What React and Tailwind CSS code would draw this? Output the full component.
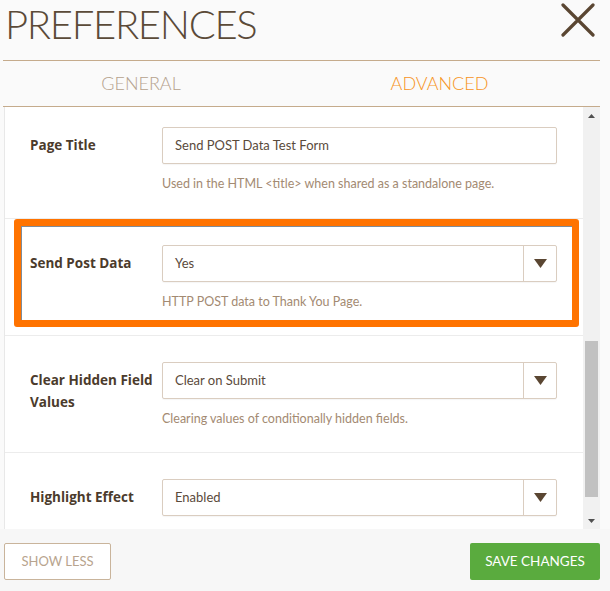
import React from 'react';

const sans = { fontFamily: 'Lato, "Open Sans", sans-serif' };

function Caret() {
  return (
    <svg width="13" height="9" viewBox="0 0 13 9" className="block">
      <path d="M0 0 H13 L6.5 9 Z" fill="#5a4632" />
    </svg>
  );
}

function Field({ value, select }) {
  return (
    <div className="flex h-[37px] w-[395px] items-stretch rounded-[2px] border border-[#dacdc0] bg-white shadow-[0_1px_1px_rgba(0,0,0,0.04)]">
      <div className="flex flex-1 items-center pl-[12px] text-[13px] text-[#5a4a3b]">{value}</div>
      {select && (
        <div className="flex w-[33px] items-center justify-center border-l border-[#dacdc0]">
          <Caret />
        </div>
      )}
    </div>
  );
}

function Row({ label, value, help, select, highlight, first }) {
  return (
    <div className={`relative flex shrink-0 border-b border-[#ececec] ${first ? 'h-[112px] pt-[20px]' : 'h-[117px] pt-[26px]'}`}>
      <div className="w-[157px] shrink-0 pl-[25px] pr-2 pt-[7px] text-[13.5px] font-bold leading-[22px] text-[#4b3b2c]" style={{ fontFamily: '"Open Sans", sans-serif' }}>
        {label}
      </div>
      <div className="flex flex-col">
        <Field value={value} select={select} />
        <div className="mt-[11px] text-[12.5px] text-[#a38a72]">{help}</div>
      </div>
      {highlight && (
        <div className="absolute left-[9px] right-[4px] top-0 bottom-[8px] rounded-[3px] border-[7px] border-[#ff7300] shadow-[inset_1px_1px_0_#7f8c99]" />
      )}
    </div>
  );
}

export default function App() {
  return (
    <div className="h-[591px] w-[610px] overflow-hidden bg-[#fafafa]" style={sans}>
      <div className="w-[600px] pl-[3px]">
        <div className="flex h-[61px] items-start justify-between border-b border-[#c5ab8c]">
          <h1 className="pl-[2px] pt-[1px] text-[40px] font-light leading-[46px] tracking-[-1.3px] text-[#5b4a38]">PREFERENCES</h1>
          <svg width="34" height="34" viewBox="0 0 34 34" className="mr-[5px] mt-[3px]">
            <path d="M2 2 L32 32 M32 2 L2 32" stroke="#5a4632" strokeWidth="3.2" strokeLinecap="round" />
          </svg>
        </div>
        <div className="flex h-[46px] items-center border-b border-[#c5ab8c] text-[18px] font-light">
          <div className="w-[276px] text-center text-[#b5a28d]">GENERAL</div>
          <div className="flex-1 text-center text-[#f7941d]">ADVANCED</div>
        </div>
      </div>

      <div className="flex h-[422px]">
        <div className="ml-[4px] flex w-[579px] flex-col overflow-hidden border-l border-[#e8e8e8] bg-white">
          <Row first label="Page Title" value="Send POST Data Test Form" help="Used in the HTML <title> when shared as a standalone page." />
          <Row highlight select label="Send Post Data" value="Yes" help="HTTP POST data to Thank You Page." />
          <Row select label={<>Clear Hidden Field<br />Values</>} value="Clear on Submit" help="Clearing values of conditionally hidden fields." />
          <Row select label="Highlight Effect" value="Enabled" help="Allow the highlight effect on form fields." />
        </div>
        <div className="flex w-[17px] flex-col items-center bg-[#f1f1f1]">
          <svg width="7" height="4" viewBox="0 0 7 4" className="mt-[7px]"><path d="M3.5 0 L7 4 H0 Z" fill="#505050" /></svg>
          <div className="mt-[223px] h-[156px] w-[13px] bg-[#c1c1c1]" />
          <svg width="7" height="4" viewBox="0 0 7 4" className="mt-[22px]"><path d="M0 0 H7 L3.5 4 Z" fill="#505050" /></svg>
        </div>
      </div>

      <div className="flex h-[62px] items-start justify-between bg-[#f7f7f7] pl-[4px] pt-[14px] pr-[10px]">
        <button className="h-[37px] w-[107px] rounded-[2px] border border-[#c9b49b] bg-white text-[13px] text-[#b8a48e]">SHOW LESS</button>
        <button className="h-[37px] w-[130px] rounded-[2px] bg-[#5aab3e] text-[13.5px] text-white">SAVE CHANGES</button>
      </div>
    </div>
  );
}
